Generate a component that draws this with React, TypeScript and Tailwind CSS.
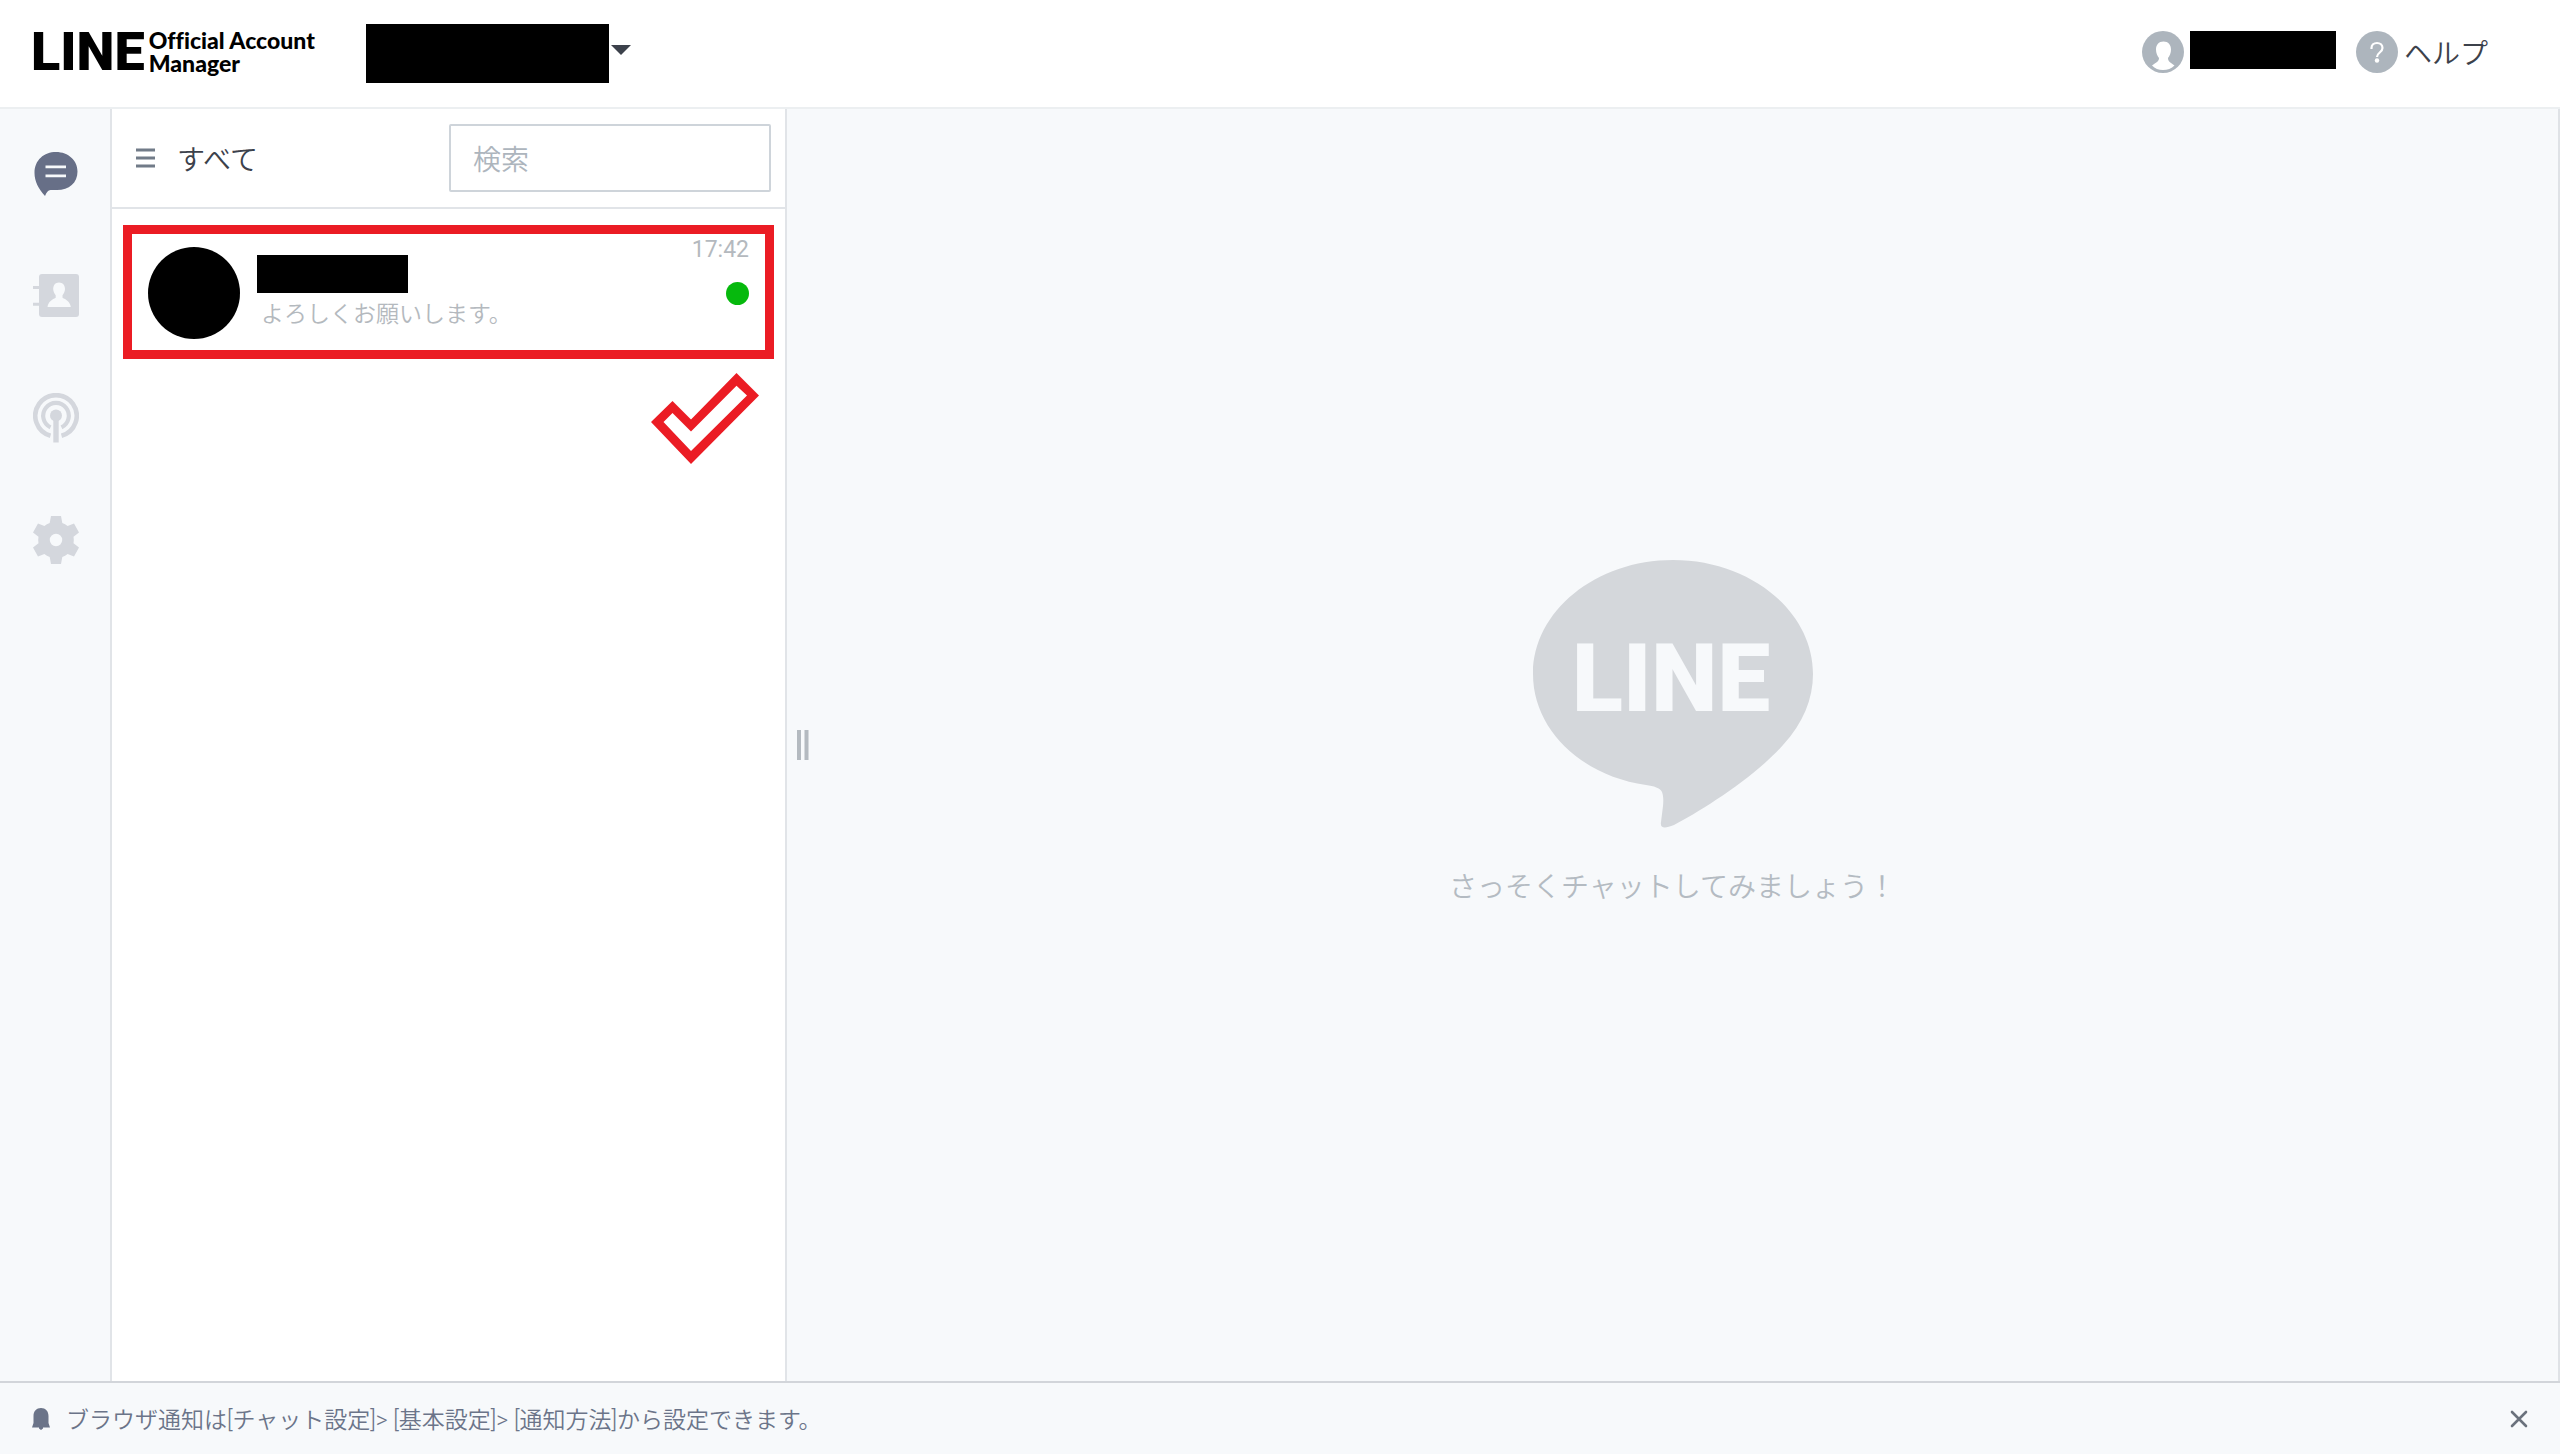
import React, { useState } from 'react';

type NavId = 'chat' | 'contacts' | 'broadcast' | 'settings';

interface Chat {
  id: number;
  message: string;
  time: string;
  unread: boolean;
}

const CHATS: Chat[] = [{ id: 1, message: 'よろしくお願いします。', time: '17:42', unread: true }];

const ChatIcon = () => (
  <svg viewBox="0 0 46 50" className="w-[46px] h-[50px]">
    <path
      d="M23 3C35.500 3 44.500 11.500 44.500 22.500C44.500 34 36 41 24 41H17.500C15 41 13.500 43.500 12 47C5.500 40 1.500 32 1.500 24C1.500 11 11 3 23 3Z"
      fill="currentColor"
    />
    <path d="M12.500 17.800h20.500M12.500 26.800h20.500" stroke="#f7f9fb" strokeWidth="2.800" />
  </svg>
);

const ContactsIcon = () => (
  <svg viewBox="0 0 46 50" className="w-[46px] h-[50px]" fill="currentColor">
    <rect x="6" y="3" width="40" height="43" rx="3" />
    <path d="M0 16.500h7M0 33.300h7" stroke="currentColor" strokeWidth="3" />
    <path
      d="M26 11.500c3.700 0 6 2.800 6 6.500c0 2.500-1.300 4.800-2.500 6.200v2.600c3.300 1.700 7.500 3.600 8.300 9.200H14.500c.8-5.600 5-7.500 8.200-9.200v-2.600c-1.200-1.400-2.500-3.700-2.500-6.200c0-3.700 2.100-6.500 5.800-6.500Z"
      fill="#f7f9fb"
    />
  </svg>
);

const BroadcastIcon = () => (
  <svg viewBox="0 0 46 50" className="w-[46px] h-[50px]" fill="none" stroke="currentColor">
    <path d="M17.500 42.800A20.700 20.700 0 1 1 28.500 42.800" strokeWidth="4.600" />
    <path d="M17.500 34.300A12.800 12.800 0 1 1 28.500 34.300" strokeWidth="4.200" />
    <circle cx="23" cy="22.500" r="6" fill="currentColor" stroke="none" />
    <path d="M23 22.500V49.500" strokeWidth="5.400" />
  </svg>
);

const SettingsIcon = () => (
  <svg viewBox="0 0 46 50" className="w-[46px] h-[50px]">
    <path
      d="M18 1H28L29.300 8C31.300 8.700 33 9.700 34.600 11L41 8.500L46 17.500L40.500 21.700C40.900 24 40.900 26 40.500 28.300L46 32.500L41 41.500L34.600 39C33 40.300 31.300 41.300 29.300 42L28 49H18L16.700 42C14.700 41.300 13 40.300 11.400 39L5 41.500L0 32.500L5.500 28.300C5.100 26 5.100 24 5.500 21.700L0 17.500L5 8.500L11.400 11C13 9.700 14.700 8.700 16.700 8ZM23 18.800A6.200 6.200 0 1 0 23 31.200A6.200 6.200 0 1 0 23 18.800Z"
      fill="currentColor"
      fillRule="evenodd"
    />
  </svg>
);

const NAV: { id: NavId; label: string; Icon: React.FC }[] = [
  { id: 'chat', label: 'チャット', Icon: ChatIcon },
  { id: 'contacts', label: '連絡先', Icon: ContactsIcon },
  { id: 'broadcast', label: '配信', Icon: BroadcastIcon },
  { id: 'settings', label: '設定', Icon: SettingsIcon }
];

const Header: React.FC = () => (
  <header className="flex items-center h-[109px] border-b-2 border-[#eceff1] bg-white pl-[31px] pr-[72px]">
    <a href="#" className="flex items-center gap-1 pb-1 text-black">
      <span className="font-['Roboto'] text-[54px] leading-[54px] font-black">LINE</span>
      <span className="font-['Lato'] text-[23px] leading-[23px] font-black [font-variant-ligatures:none]">
        Official Account
        <br />
        Manager
      </span>
    </a>
    <button type="button" aria-label="アカウント" className="ml-[51px] flex items-center gap-[2px]">
      <span className="w-[243px] h-[59px] bg-black" />
      <svg viewBox="0 0 20 10" className="w-5 h-[10px] mb-2">
        <path d="M0 0H20L10 10Z" fill="#3c414b" />
      </svg>
    </button>

    <div className="ml-auto flex items-center pb-1">
      <button type="button" aria-label="ユーザー" className="flex items-center gap-[6px]">
        <svg viewBox="0 0 42 42" className="w-[42px] h-[42px]">
          <circle cx="21" cy="21" r="21" fill="#adb5bd" />
          <path
            d="M21.500 10.500c4.800 0 7.500 3.400 7.500 8c0 3.500-1.300 6.500-3 8.500c0 3.800 2.500 4.500 6.500 7.500C29.500 37.500 25.500 39 21 39S13 37.500 10 34.500c4-3 7-3.700 7-7.500c-1.700-2-3-5-3-8.500c0-4.600 2.700-8 7.500-8Z"
            fill="#fff"
          />
        </svg>
        <span className="w-[146px] h-[38px] mb-1 bg-black" />
      </button>
      <a href="#" className="ml-5 flex items-center gap-[6px] text-[28px] leading-[42px] text-[#3c414b]">
        <svg viewBox="0 0 42 42" className="w-[42px] h-[42px]">
          <circle cx="21" cy="21" r="21" fill="#adb5bd" />
          <path
            d="M15.500 18v-1c0-3 2.300-5 5.500-5s5.500 2 5.500 5c0 4.500-5.500 4.500-5.500 9"
            fill="none"
            stroke="#fff"
            strokeWidth="2.200"
          />
          <circle cx="21" cy="29.500" r="2.200" fill="#fff" />
        </svg>
        ヘルプ
      </a>
    </div>
  </header>
);

const ChatList: React.FC = () => {
  const [query, setQuery] = useState('');
  const visible = CHATS.filter(c => c.message.includes(query));

  return (
    <section className="flex flex-col w-[677px] shrink-0 bg-white border-x-2 border-[#e1e4e8]">
      {/* Filter and search */}
      <div className="flex items-center justify-between h-[100px] pl-6 pr-[14px] border-b-2 border-[#e1e4e8]">
        <button type="button" className="flex items-center gap-[22px] text-[28px] leading-[42px] text-[#3c414b]">
          <svg viewBox="0 0 19 20" className="w-[19px] h-5">
            <path d="M0 2h19M0 10h19M0 18h19" stroke="#717b88" strokeWidth="3" />
          </svg>
          すべて
        </button>
        <input
          type="text"
          aria-label="検索"
          placeholder="検索"
          value={query}
          onChange={e => setQuery(e.target.value)}
          className="w-[322px] h-[68px] px-[22px] border-2 border-[#ced4da] rounded-xs text-[28px] text-[#3c414b] placeholder:text-[#adb5bd]"
        />
      </div>

      {/* Conversations */}
      <ul className="px-[11px] pt-4">
        {visible.map(chat => (
          <li key={chat.id}>
            <button
              type="button"
              className="flex items-center w-full h-[134px] border-9 border-[#eb1c24] px-4 pt-[2px] text-left"
            >
              <span className="w-[92px] h-[92px] rounded-full bg-black shrink-0" />
              <span className="flex-1 flex flex-col ml-[17px]">
                <span className="w-[151px] h-[38px] bg-black" />
                <span className="pl-1 text-[23px] leading-[38px] text-[#b4b9be]">{chat.message}</span>
              </span>
              <span className="flex flex-col items-end gap-[18px] self-start">
                <span className="font-['Roboto'] font-normal text-[23px] leading-7 text-[#b4b9be]">{chat.time}</span>
                {chat.unread && <span className="w-[23px] h-[23px] rounded-full bg-[#06b90d]" />}
              </span>
            </button>
          </li>
        ))}
      </ul>
      <svg viewBox="0 0 108 91" className="w-[108px] h-[91px] mt-[14px] mr-[26px] self-end">
        <path
          d="M85.500 0L108 22.500L40 91L0 49L21.500 28L40 46.500ZM85.500 12.700L40 58.500L21.500 40L12.500 49L40 78L96 22.500Z"
          fill="#eb1c24"
          fillRule="evenodd"
        />
      </svg>
    </section>
  );
};

const EmptyChat: React.FC = () => (
  <main className="relative flex-1 flex flex-col items-center justify-center gap-9 pb-6 border-r-2 border-[#dfe2e6]">
    {/* Resize handle */}
    <svg viewBox="0 0 12 30" className="absolute left-[10px] top-1/2 -translate-y-1/2 w-3 h-[30px]">
      <path d="M2 0v30M9.500 0v30" stroke="#b4bac0" strokeWidth="4" />
    </svg>
    <svg viewBox="0 0 280 268" className="w-[280px] h-[268px]">
      <path
        d="M140 0C217 0 280 51 280 114C280 139 270 163 250 185C221 218 166 252 141 265C131 269 127 268 128 262L130 246C130.500 241 130.500 236 129 232C127 228 121 226 113 225C49 216 0 170 0 114C0 51 63 0 140 0Z"
        fill="#d4d7db"
      />
      <text x="138" y="151" textAnchor="middle" fontSize="94" className="font-['Roboto'] font-black" fill="#f7f9fb">
        LINE
      </text>
    </svg>
    <p className="text-[28px] leading-[42px] text-[#b4bbc2]">さっそくチャットしてみましょう！</p>
  </main>
);

const NoticeBar: React.FC<{ onClose: () => void }> = ({ onClose }) => (
  <footer className="flex items-center h-[73px] border-t-2 border-[#d2d5da] px-8 text-[#6b7489]">
    <svg viewBox="0 0 18 22" className="w-[18px] h-[22px]" fill="currentColor">
      <path d="M9 0c4.500 0 7.500 3 7.500 8v7l1.500 4.500H0L1.500 15V8c0-5 3-8 7.500-8ZM7 19h4v1.500L9 22l-2-1.500Z" />
    </svg>
    <p className="ml-4 pt-1 font-['Roboto','Noto_Sans_CJK_JP',sans-serif] text-[23px] leading-9">
      ブラウザ通知は[チャット設定]&gt; [基本設定]&gt; [通知方法]から設定できます。
    </p>
    <button type="button" aria-label="閉じる" onClick={onClose} className="ml-auto">
      <svg viewBox="0 0 18 18" className="w-[18px] h-[18px]">
        <path d="M2 2L16 16M16 2L2 16" stroke="#6a717c" strokeWidth="2.600" strokeLinecap="round" />
      </svg>
    </button>
  </footer>
);

const App: React.FC = () => {
  const [active, setActive] = useState<NavId>('chat');
  const [showNotice, setShowNotice] = useState(true);

  return (
    <div className="flex flex-col h-screen bg-[#f7f9fb] font-['Noto_Sans_CJK_JP',sans-serif] font-[350]">
      <Header />
      <div className="flex flex-1 min-h-0">
        <nav className="flex flex-col items-center gap-[72px] w-[110px] shrink-0 pt-10 pl-[2px]">
          {NAV.map(({ id, label, Icon }) => (
            <button
              key={id}
              type="button"
              aria-label={label}
              onClick={() => setActive(id)}
              className={active === id ? 'text-[#676f87]' : 'text-[#d4d7dd]'}
            >
              <Icon />
            </button>
          ))}
        </nav>
        <ChatList />
        <EmptyChat />
      </div>
      {showNotice && <NoticeBar onClose={() => setShowNotice(false)} />}
    </div>
  );
};

export default App;
